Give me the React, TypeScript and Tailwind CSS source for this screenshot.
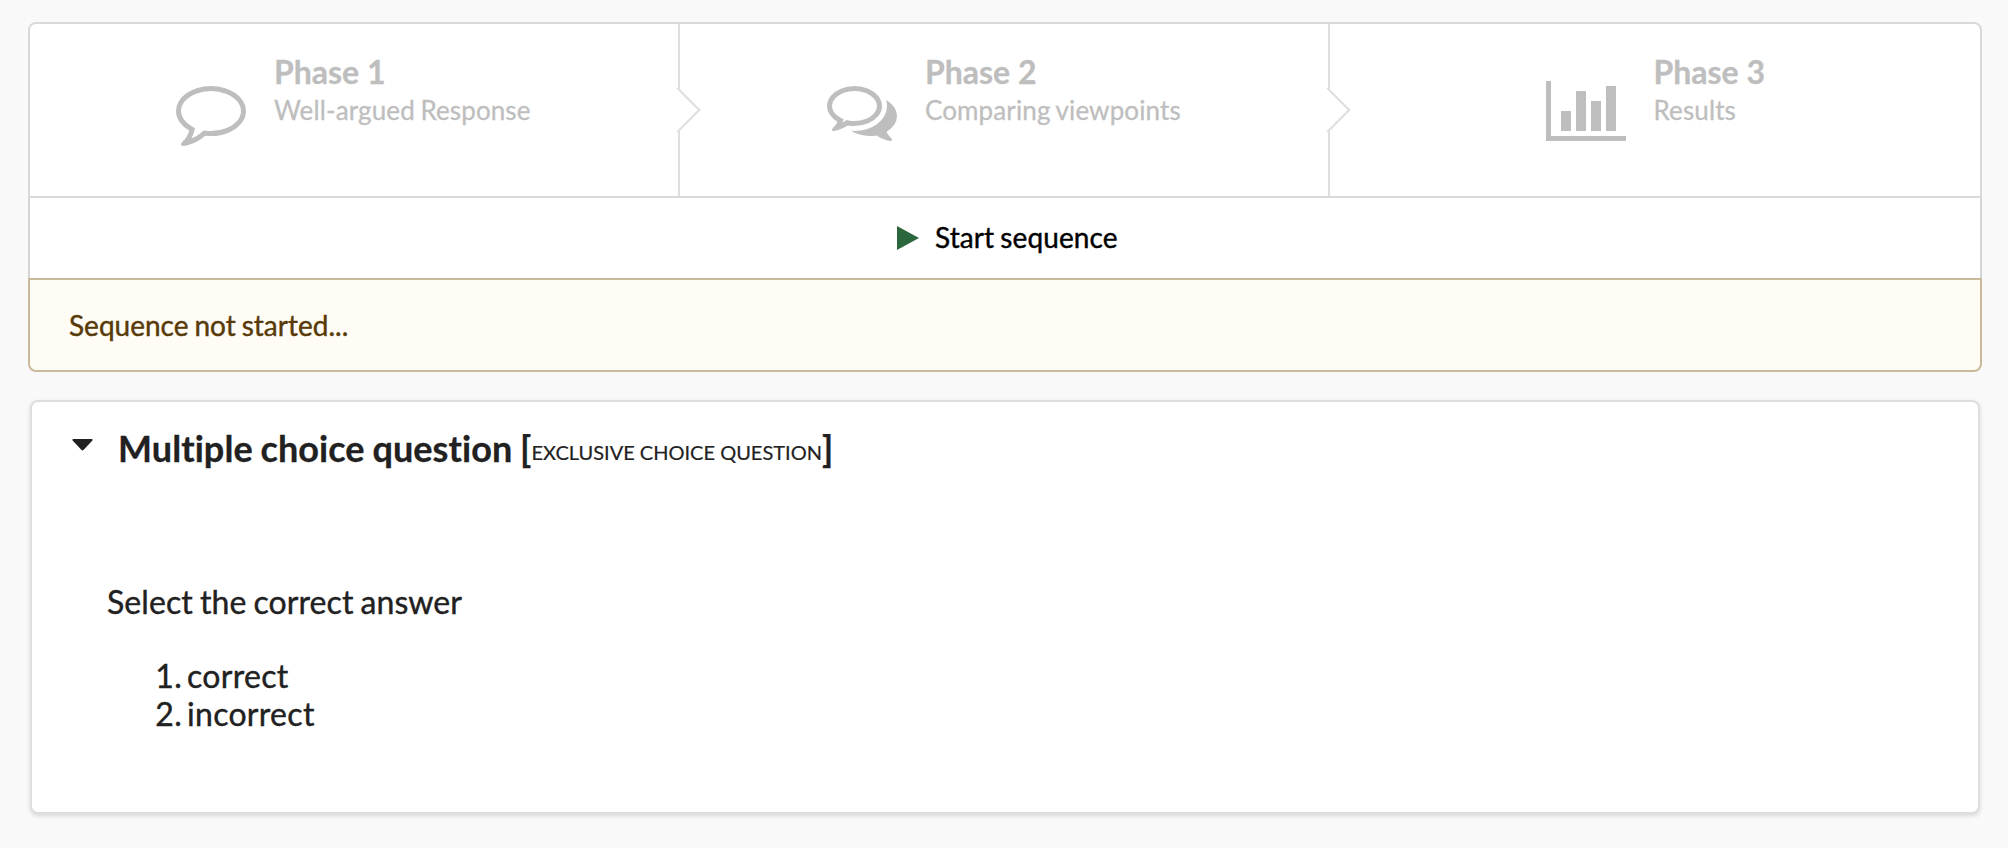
import type { ReactNode } from "react";

const CommentIcon = () => (
  <svg width="70" height="60" viewBox="0 -1280 1792 1536" fill="currentColor" className="mt-[62px] shrink-0">
    <path
      transform="scale(1 -1)"
      d="M896 1152q-204 0 -381.5 -69.5t-282 -187.5t-104.5 -255q0 -112 71.5 -213.5t201.5 -175.5l87 -50l-27 -96q-24 -91 -70 -172q152 63 275 171l43 38l57 -6q69 -8 130 -8q204 0 381.5 69.5t282 187.5t104.5 255t-104.5 255t-282 187.5t-381.5 69.5zM1792 640q0 -174 -120 -321.5t-326 -233t-450 -85.5q-70 0 -145 8q-198 -175 -460 -242q-49 -14 -114 -22h-5q-15 0 -27 10.5t-16 27.5v1q-3 4 -0.5 12t2 10t4.5 9.5l6 9t7 8.5t8 9q7 8 31 34.5t34.5 38t31 39.5t32.5 51t27 59t26 76q-157 89 -247.5 220t-90.5 281q0 130 71 248.5t191 204.5t286 136.5t348 50.5t348 -50.5t286 -136.5t191 -204.5t71 -248.5z"
    />
  </svg>
);

const CommentsIcon = () => (
  <svg width="70" height="60" viewBox="0 -1280 1792 1536" fill="currentColor" className="mt-[62px] shrink-0">
    <path
      transform="scale(1 -1)"
      d="M704 1152q-153 0 -286 -52t-211.5 -141t-78.5 -191q0 -82 53 -158t149 -132l97 -56l-35 -84q34 20 62 39l44 31l53 -10q78 -14 153 -14q153 0 286 52t211.5 141t78.5 191t-78.5 191t-211.5 141t-286 52zM704 1280q191 0 353.5 -68.5t256.5 -186.5t94 -257t-94 -257t-256.5 -186.5t-353.5 -68.5q-86 0 -176 16q-124 -88 -278 -128q-36 -9 -86 -16h-3q-11 0 -20.5 8t-11.5 21q-1 3 -1 6.5t0.5 6.5t2 6l2.5 5t3.5 5.5t4 5t4.5 5t4 4.5q5 6 23 25t26 29.5t22.5 29t25 38.5t20.5 44q-124 72 -195 177t-71 224q0 139 94 257t256.5 186.5t353.5 68.5zM1526 111q10 -24 20.5 -44t25 -38.5t22.5 -29t26 -29.5t23 -25q1 -1 4 -4.5t4.5 -5t4 -5t3.5 -5.5l2.5 -5t2 -6t0.5 -6.5t-1 -6.5q-3 -14 -13 -22t-22 -7q-50 7 -86 16q-154 40 -278 128q-90 -16 -176 -16q-271 0 -472 132q58 -4 88 -4q161 0 309 45t264 129q125 92 192 212t67 254q0 77 -23 152q129 -71 204 -178t75 -230q0 -120 -71 -224.5t-195 -176.5z"
    />
  </svg>
);

const ChartIcon = () => (
  <svg width="80" height="60" viewBox="0 0 80 60" fill="currentColor" className="mt-[57px] shrink-0">
    <path d="M0 0h5v55h75v5H0zM15 30h10v20H15zM30 10h10v40H30zM45 20h10v30H45zM60 5h10v45H60z" />
  </svg>
);

type StepProps = { icon: ReactNode; title: string; text: string; pad: string; arrow?: boolean };

const Step = ({ icon, title, text, pad, arrow }: StepProps) => (
  <div
    className={`relative flex h-[172px] w-[650px] items-start text-[#bebebe] ${pad} ${
      arrow ? "border-r-2 border-[#dededf]" : ""
    }`}
  >
    {icon}
    <div className="mt-[29px] ml-7">
      <div className="text-[32px] leading-[38px] font-bold [-webkit-text-stroke:0.3px]">{title}</div>
      <div className="mt-[3px] text-[26px] leading-[32px] tracking-[0.12px] [word-spacing:-1.2px] [-webkit-text-stroke:0.3px]">
        {text}
      </div>
    </div>
    {arrow && (
      <span className="absolute top-1/2 right-0 z-10 size-8 translate-x-1/2 -translate-y-1/2 -rotate-45 border-r-2 border-b-2 border-[#dededf] bg-white" />
    )}
  </div>
);

export default function App() {
  return (
    <div className="h-[848px] w-[2008px] overflow-hidden bg-[#f9f9f9] pt-[22px] pl-7 font-['Lato',sans-serif] text-[#212121] [font-variant-ligatures:none]">
      <div className="w-[1954px]">
        <div className="flex h-[176px] rounded-t-lg border-2 border-[#d9d9d9] bg-white">
          <Step icon={<CommentIcon />} title="Phase 1" text="Well-argued Response" pad="pl-[146px]" arrow />
          <Step icon={<CommentsIcon />} title="Phase 2" text="Comparing viewpoints" pad="pl-[147px]" arrow />
          <Step icon={<ChartIcon />} title="Phase 3" text="Results" pad="pl-[215.5px]" />
        </div>
        <button className="flex h-[80px] w-full items-center border-x-2 border-[#d4d4d5] bg-white pl-[867px] text-[28px] leading-[34px] tracking-[0.1px] text-black [word-spacing:-1.2px] [-webkit-text-stroke:0.4px]">
          <svg width="22" height="24" viewBox="0 0 22 24" className="mr-4 shrink-0">
            <path d="M0 0l22 12L0 24z" fill="#2c663c" stroke="none" />
          </svg>
          <span className="-mt-[2px]">Start sequence</span>
        </button>
        <div className="flex h-[94px] items-center rounded-b-lg border-2 border-[#c9ba9b] bg-[#fffcf5] pl-[39px] text-[28px] leading-[34px] text-[#573a08] [word-spacing:-1.2px] [-webkit-text-stroke:0.4px]">
          Sequence not started...
        </div>
      </div>

      <section className="mt-7 ml-[2px] h-[414px] w-[1950px] rounded-lg border-2 border-[#dededf] bg-white shadow-[0_2px_4px_0_rgba(34,36,38,0.15)]">
        <h3 className="mt-[24px] ml-[40px] flex h-[44px] items-center text-[36px] leading-[44px] font-bold [-webkit-text-stroke:0.3px]">
          <svg width="21" height="12" viewBox="0 0 21 12" className="mt-[-6px] mr-[25px] shrink-0">
            <path d="M1.3 0H19.7Q21.2 .4 20.2 1.7L11.5 11.1Q10.5 12 9.5 11.1L.8 1.7Q-.2 .4 1.3 0Z" fill="#212121" />
          </svg>
          <span className="tracking-[0.08px] whitespace-pre [word-spacing:-1.1px]">Multiple choice question [</span>
          <span className="mt-[8px] text-[20px] leading-[24px] font-normal [-webkit-text-stroke:0.2px]">EXCLUSIVE CHOICE QUESTION</span>
          <span>]</span>
        </h3>
        <div className="[-webkit-text-stroke:0.4px]">
          <p className="mt-[113px] ml-[75px] text-[32px] leading-[38px] tracking-[0.08px] [word-spacing:-1.2px]">
            Select the correct answer
          </p>
          <ol className="mt-9 text-[32px] leading-[38px] tracking-[0.3px]">
            {["correct", "incorrect"].map((answer, i) => (
              <li key={answer} className="flex">
                <span className="w-[150px] text-right">{i + 1}.</span>
                <span className="ml-[5px]">{answer}</span>
              </li>
            ))}
          </ol>
        </div>
      </section>
    </div>
  );
}
